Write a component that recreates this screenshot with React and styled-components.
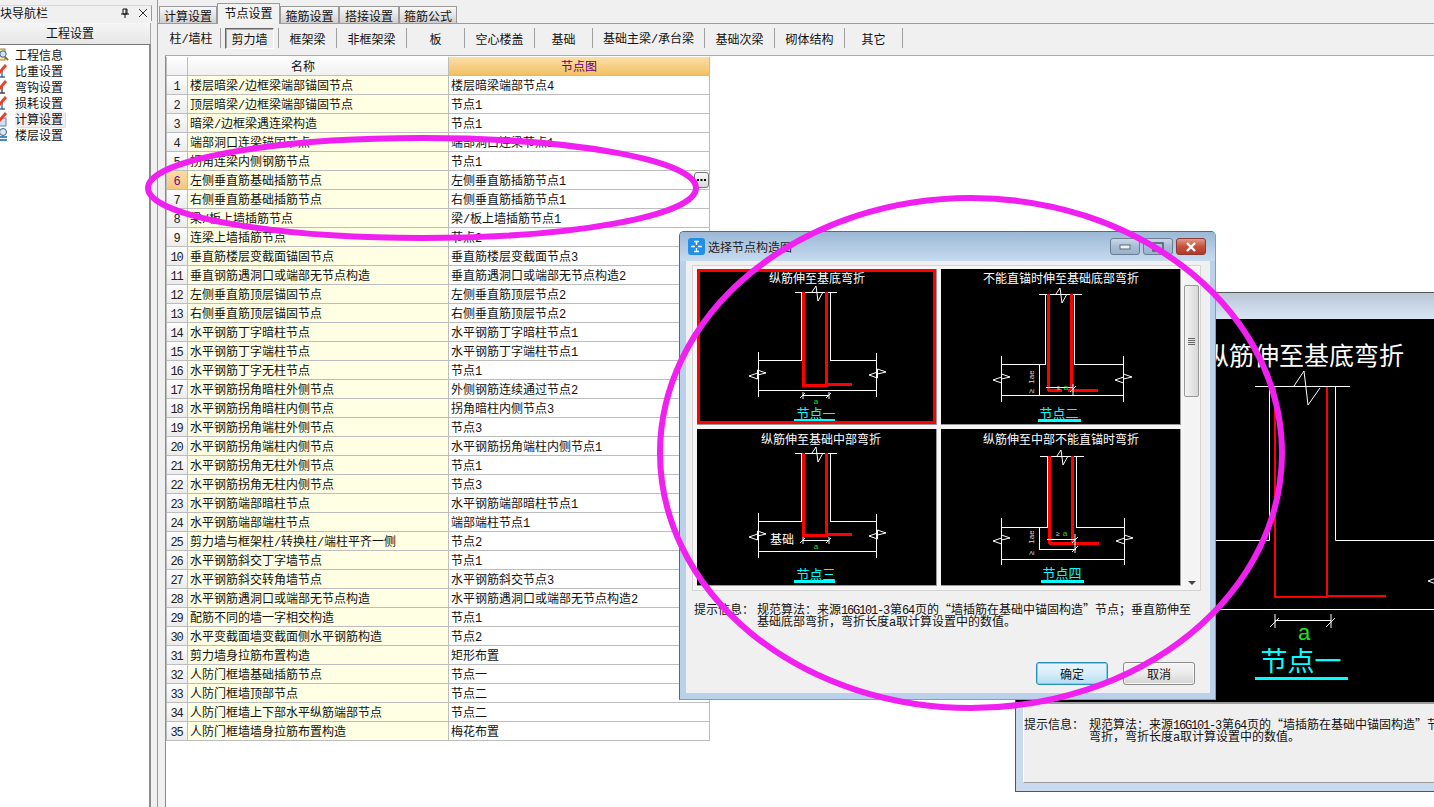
import React from "react";
import styled, { createGlobalStyle } from "styled-components";

const FONT = `"Noto Sans CJK SC", "Liberation Sans", sans-serif`;

const Global = createGlobalStyle`
  html, body { margin: 0; padding: 0; background: #fff; }
  body { font-family: ${FONT}; font-size: 12px; color: #111; }
`;

const Page = styled.div`
  position: relative;
  display: flex;
  width: 1434px;
  height: 807px;
  overflow: hidden;
  background: #f0f0f0;
`;
const Latin = styled.span`
  font-family: "Liberation Mono", monospace;
  font-size: 12px;
  line-height: 1;
  letter-spacing: -1.2px;
  margin-right: 1px;
`;

/* ---------- sidebar ---------- */
const Sidebar = styled.aside`
  width: 151px;
  flex: none;
  display: flex;
  flex-direction: column;
  padding-top: 5px;
  box-sizing: border-box;
`;
const DockHeader = styled.div`
  height: 14px;
  margin-right: -1px;
  display: flex;
  align-items: center;
  line-height: 14px;
  border-top: 1px solid #d8d8d8;
  border-right: 1px solid #9a9a9a;
  padding-bottom: 1px;
`;
const DockTitle = styled.span`flex: 1;`;
const DockIcon = styled.svg`
  width: 10px;
  height: 10px;
  margin-right: ${(p) => p.$mr}px;
  flex: none;
`;
const SectionButton = styled.div`
  height: 21px;
  margin-top: 2px;
  line-height: 20px;
  text-align: center;
  padding-right: 10px;
  background: linear-gradient(#f6f6f6, #e6e6e6);
  border-bottom: 1px solid #777;
  border-right: 1px solid #a8a8a8;
`;
const NavList = styled.ul`
  flex: 1;
  margin: 0;
  padding: 2px 0 0;
  list-style: none;
  background: #fff;
  border-right: 2px solid #8b8b8b;
`;
const NavRow = styled.li`
  height: 16px;
  display: flex;
  align-items: center;
  line-height: 16px;
`;
const NavIcon = styled.svg`
  width: 16px;
  height: 16px;
  flex: none;
  margin: 0 5px 0 -6px;
`;
const NavLabel = styled.span`
  padding: 0 2px 0 0;
  border-radius: 2px;
  background: ${(p) => (p.$active ? "#f0f0f2" : "transparent")};
  box-shadow: ${(p) => (p.$active ? "1px 1px 0 #e0e0e0" : "none")};
`;

/* ---------- main ---------- */
const Main = styled.main`
  flex: 1;
  margin-left: 6px;
  display: flex;
  flex-direction: column;
  border-left: 1px solid #9a9a9a;
  min-width: 0;
`;
const TabBar = styled.div`
  height: 24px;
  flex: none;
  display: flex;
  align-items: flex-end;
  padding-left: 2px;
  box-sizing: border-box;
  border-bottom: 1px solid #9a9a9f;
  margin-left: -1px;
`;
const Tab = styled.div`
  width: ${(p) => p.$w}px;
  height: ${(p) => (p.$active ? 21 : 17)}px;
  box-sizing: border-box;
  text-align: center;
  line-height: 17px;
  border: 1px solid #9a9a9a;
  border-bottom: none;
  margin-bottom: ${(p) => (p.$active ? -1 : 0)}px;
  background: ${(p) => (p.$active ? "#f2f2f2" : "linear-gradient(#f8f8f8, #cfcfcf)")};
  position: relative;
`;
const SubBar = styled.div`
  height: 32px;
  flex: none;
  box-sizing: border-box;
  padding: 4px 0 7px;
  margin-left: 7px;
  border-bottom: 1px solid #a9a9ae;
`;
const SubBarRow = styled.div`
  display: flex;
  height: 100%;
  margin-left: -3px;
`;
const SubItem = styled.div`
  width: ${(p) => p.$w}px;
  box-sizing: border-box;
  display: flex;
  align-items: center;
  justify-content: center;
  border-right: 1px solid #a0a0a0;
`;
const SubLabel = styled.span`
  line-height: 15px;
  padding: ${(p) => (p.$active ? "2px 5px" : "0")};
  ${(p) =>
    p.$active
      ? "border: 1px solid; border-color: #666 #fff #fff #666; background: #ededed; box-shadow: inset 1px 1px 0 #aaa;"
      : ""}
`;
const Workspace = styled.div`
  flex: 1;
  margin-left: 7px;
  background: #fff;
  border-left: 1px solid #8b8b8b;
  padding-top: 1px;
`;
const Sheet = styled.div`
  width: 542px;
  border-left: 1px solid #bdbdbd;
  border-right: 1px solid #bdbdbd;
  display: flex;
  flex-direction: column;
`;
const SheetRow = styled.div`
  display: grid;
  grid-template-columns: 21px 261px 260px;
  grid-template-rows: 18px;
  height: 19px;
  box-sizing: border-box;
  border-bottom: 1px solid #bdbdbd;
  line-height: 18px;
`;
const IndexCell = styled.div`
  text-align: center;
  border-right: 1px solid #bdbdbd;
  overflow: hidden;
  color: ${(p) => (p.$sel ? "#5a0a8a" : "#222")};
  background: ${(p) => (p.$sel ? "linear-gradient(#fbdca6, #f6c67c)" : "linear-gradient(#fdfdfd, #ececec)")};
`;
const NameCell = styled.div`
  padding-left: 2px;
  background: #ffffe3;
  border-right: 1px solid #bdbdbd;
  white-space: nowrap;
  overflow: hidden;
`;
const ValueCell = styled.div`
  position: relative;
  padding-left: 2px;
  background: #fff;
  white-space: nowrap;
`;
const HeadCell = styled.div`
  text-align: center;
  padding-right: ${(p) => p.$pr || 0}px;
  color: ${(p) => (p.$hot ? "#63007f" : "#111")};
  background: ${(p) => (p.$hot ? "linear-gradient(#fbdfa8, #f2c062)" : "linear-gradient(#fff, #f0f0f0)")};
  border-right: ${(p) => (p.$hot ? "none" : "1px solid #bdbdbd")};
`;
const MoreButton = styled.button`
  position: absolute;
  right: 0;
  top: 1px;
  width: 15px;
  height: 16px;
  padding: 0;
  display: flex;
  align-items: center;
  justify-content: center;
  border: 1px solid #777;
  border-radius: 3px;
  background: linear-gradient(#fafafa, #d8d8d8);
`;

/* ---------- windows ---------- */
const BackWindow = styled.div`
  position: absolute;
  left: 1015px;
  top: 292px;
  width: 520px;
  height: 500px;
  box-sizing: border-box;
  border: 1px solid #555;
  background: #c9daee;
  display: flex;
  flex-direction: column;
`;
const BackTitle = styled.div`
  height: 26px;
  flex: none;
  background: linear-gradient(#b8c6d6, #d8e6f4);
`;
const BackArt = styled.svg`
  display: block;
  width: 518px;
  height: 383px;
  flex: none;
  background: #000;
`;
const BackHint = styled.div`
  height: 81px;
  margin: 0 0 7px 7px;
  flex: none;
  box-sizing: border-box;
  border-top: 2px solid #9c9c9c;
  border-bottom: 1px solid #9c9c9c;
  border-left: 1px solid #fff;
  background: #efefef;
  padding: 14px 0 0 0;
  display: flex;
  line-height: 12px;
`;
const HintKey = styled.div`
  width: ${(p) => p.$w}px;
  height: 12px;
  flex: none;
`;
const HintBody = styled.div`
  flex: none;
`;
const HintLine = styled.div`
  white-space: nowrap;
  height: 12px;
`;
const Dialog = styled.div`
  position: absolute;
  left: 679px;
  top: 231px;
  width: 537px;
  height: 469px;
  box-sizing: border-box;
  border: 1px solid #5a6a7a;
  border-right-color: #29c0ee;
  border-bottom-color: #29c0ee;
  border-radius: 5px 5px 0 0;
  background: #b9d1ea;
  display: flex;
  flex-direction: column;
`;
const DialogTitle = styled.div`
  height: 29px;
  flex: none;
  display: flex;
  align-items: center;
  padding: 0 9px 0 8px;
  background: linear-gradient(#9cb8d6, #c6dbef);
  border-radius: 4px 4px 0 0;
  color: #222;
`;
const AppIcon = styled.svg`
  width: 17px;
  height: 17px;
  margin-right: 3px;
  flex: none;
`;
const TitleText = styled.span`flex: 1;`;
const WinButton = styled.div`
  width: ${(p) => p.$w}px;
  height: 17px;
  margin-left: 3px;
  box-sizing: border-box;
  border: 1px solid ${(p) => (p.$close ? "#8a3a30" : "#6a7d92")};
  border-radius: 3px;
  display: flex;
  align-items: center;
  justify-content: center;
  background: ${(p) =>
    p.$close ? "linear-gradient(#e09a88, #c8503c 50%, #b03a2a)" : "linear-gradient(#c8d8ea, #a8bcd4 50%, #9cb2cc)"};
`;
const DialogBody = styled.div`
  flex: 1;
  margin: 0 5px 6px 6px;
  background: #f0f0f0;
  display: flex;
  flex-direction: column;
  padding: 4px 9px 0 6px;
`;
const Gallery = styled.div`
  height: 326px;
  flex: none;
  display: flex;
  box-sizing: border-box;
  border: 1px solid #d4d4d4;
  background: #f6f6f6;
  padding: 3px 0 0 4px;
`;
const CellGrid = styled.div`
  display: grid;
  grid-template-columns: 240px 240px;
  grid-template-rows: 156px 157px;
  column-gap: 4px;
  row-gap: 4px;
`;
const NodeCell = styled.div`
  position: relative;
  background: #000;
  border-right: 1px solid #999;
  border-bottom: 1px solid #999;
  box-sizing: border-box;
  &::after {
    content: "";
    position: absolute;
    inset: 0;
    border: ${(p) => (p.$sel ? "3px solid #ff0000" : "0")};
  }
`;
const NodeSvg = styled.svg`
  display: block;
  width: 240px;
  height: 157px;
`;
const ScrollTrack = styled.div`
  width: 16px;
  margin-left: 3px;
  margin-right: 1px;
  display: flex;
  flex-direction: column;
  align-items: center;
  padding-top: 16px;
  background: #f4f4f4;
  position: relative;
`;
const ScrollThumb = styled.div`
  width: 15px;
  height: 112px;
  box-sizing: border-box;
  border: 1px solid #999;
  border-radius: 2px;
  background: linear-gradient(90deg, #f4f4f4, #d8d8d8);
  display: flex;
  align-items: center;
  justify-content: center;
`;
const Grip = styled.div`
  width: 7px;
  height: 7px;
  background: repeating-linear-gradient(#666 0 1px, transparent 1px 2px);
`;
const ScrollArrow = styled.div`
  position: absolute;
  bottom: 5px;
  left: 4px;
  width: 0;
  height: 0;
  border-left: 4px solid transparent;
  border-right: 4px solid transparent;
  border-top: 4px solid #444;
`;
const DialogHint = styled.div`
  display: flex;
  padding: 12px 0 0 2px;
  line-height: 12px;
  height: 47px;
  flex: none;
`;
const DialogFooter = styled.div`
  display: flex;
  justify-content: flex-end;
  gap: 15px;
  padding: 12px 6px 0 0;
`;
const PushButton = styled.button`
  width: 72px;
  height: 23px;
  padding: 0;
  font: 12px/20px ${FONT};
  color: #111;
  border-radius: 3px;
  border: 1px solid ${(p) => (p.$primary ? "#2a8ebc" : "#8a8a8a")};
  background: ${(p) =>
    p.$primary ? "linear-gradient(#eaf6fc, #d8eefa 50%, #b4dcf2)" : "linear-gradient(#f4f4f4, #ebebeb 50%, #d2d2d2)"};
  box-shadow: ${(p) => (p.$primary ? "inset 0 0 0 1px #7fd0ee" : "inset 0 0 0 1px #f8f8f8")};
`;
const Scribble = styled.svg`
  position: absolute;
  left: 0;
  top: 0;
  width: 1434px;
  height: 807px;
  pointer-events: none;
`;

/* ---------- drawing parts ---------- */
const Sketch = styled.path`
  fill: none;
  stroke: #fff;
  stroke-width: ${(p) => p.$w || 1.2}px;
  shape-rendering: crispEdges;
`;
const Thin = styled.path`
  fill: none;
  stroke: #fff;
  stroke-width: 1px;
`;
const Rebar = styled.path`
  fill: none;
  stroke: #ff0000;
  stroke-width: ${(p) => p.$w || 2.4}px;
  shape-rendering: crispEdges;
`;
const ArtTitle = styled.text`
  fill: #fff;
  font-size: ${(p) => p.$size || 12}px;
  text-anchor: middle;
  font-family: ${FONT};
`;
const ArtLabel = styled.text`
  fill: #00ffff;
  font-size: ${(p) => p.$size || 13}px;
  text-anchor: middle;
  font-family: ${FONT};
`;
const ArtGreen = styled.text`
  fill: #1fe01f;
  font-size: ${(p) => p.$size || 8}px;
  text-anchor: middle;
  font-family: "Liberation Sans", sans-serif;
`;
const ArtNote = styled.text`
  fill: #d8d8e8;
  font-size: ${(p) => p.$size || 8}px;
  text-anchor: middle;
  font-family: "Liberation Sans", sans-serif;
`;
const CyanBar = styled.rect`
  fill: #00ffff;
`;

const rows = [
  ["楼层暗梁/边框梁端部锚固节点", "楼层暗梁端部节点4"],
  ["顶层暗梁/边框梁端部锚固节点", "节点1"],
  ["暗梁/边框梁遇连梁构造", "节点1"],
  ["端部洞口连梁锚固节点", "端部洞口连梁节点1"],
  ["拐角连梁内侧钢筋节点", "节点1"],
  ["左侧垂直筋基础插筋节点", "左侧垂直筋插筋节点1"],
  ["右侧垂直筋基础插筋节点", "右侧垂直筋插筋节点1"],
  ["梁/板上墙插筋节点", "梁/板上墙插筋节点1"],
  ["连梁上墙插筋节点", "节点2"],
  ["垂直筋楼层变截面锚固节点", "垂直筋楼层变截面节点3"],
  ["垂直钢筋遇洞口或端部无节点构造", "垂直筋遇洞口或端部无节点构造2"],
  ["左侧垂直筋顶层锚固节点", "左侧垂直筋顶层节点2"],
  ["右侧垂直筋顶层锚固节点", "右侧垂直筋顶层节点2"],
  ["水平钢筋丁字暗柱节点", "水平钢筋丁字暗柱节点1"],
  ["水平钢筋丁字端柱节点", "水平钢筋丁字端柱节点1"],
  ["水平钢筋丁字无柱节点", "节点1"],
  ["水平钢筋拐角暗柱外侧节点", "外侧钢筋连续通过节点2"],
  ["水平钢筋拐角暗柱内侧节点", "拐角暗柱内侧节点3"],
  ["水平钢筋拐角端柱外侧节点", "节点3"],
  ["水平钢筋拐角端柱内侧节点", "水平钢筋拐角端柱内侧节点1"],
  ["水平钢筋拐角无柱外侧节点", "节点1"],
  ["水平钢筋拐角无柱内侧节点", "节点3"],
  ["水平钢筋端部暗柱节点", "水平钢筋端部暗柱节点1"],
  ["水平钢筋端部端柱节点", "端部端柱节点1"],
  ["剪力墙与框架柱/转换柱/端柱平齐一侧", "节点2"],
  ["水平钢筋斜交丁字墙节点", "节点1"],
  ["水平钢筋斜交转角墙节点", "水平钢筋斜交节点3"],
  ["水平钢筋遇洞口或端部无节点构造", "水平钢筋遇洞口或端部无节点构造2"],
  ["配筋不同的墙一字相交构造", "节点1"],
  ["水平变截面墙变截面侧水平钢筋构造", "节点2"],
  ["剪力墙身拉筋布置构造", "矩形布置"],
  ["人防门框墙基础插筋节点", "节点一"],
  ["人防门框墙顶部节点", "节点二"],
  ["人防门框墙上下部水平纵筋端部节点", "节点二"],
  ["人防门框墙墙身拉筋布置构造", "梅花布置"],
];

const nav = ["工程信息", "比重设置", "弯钩设置", "损耗设置", "计算设置", "楼层设置"];
const tabs = [["计算设置", 58], ["节点设置", 63], ["箍筋设置", 59], ["搭接设置", 60], ["箍筋公式", 58]];
const subs = [
  ["柱/墙柱", 59], ["剪力墙", 58], ["框架梁", 58], ["非框架梁", 70], ["板", 58], ["空心楼盖", 70],
  ["基础", 58], ["基础主梁/承台梁", 112], ["基础次梁", 70], ["砌体结构", 70], ["其它", 58],
];

function Mixed({ text }) {
  return String(text)
    .split(/([0-9A-Za-z/\-]+)/)
    .map((part, i) => (i % 2 ? <Latin key={i}>{part}</Latin> : part));
}

function NavGlyph({ kind }) {
  if (kind === 0)
    return (
      <NavIcon viewBox="0 0 16 16">
        <rect x="2" y="2" width="9" height="11" fill="#f6e7b0" stroke="#a08040" />
        <circle cx="9" cy="7" r="3.2" fill="#cfe4f6" stroke="#47617c" />
        <path d="M11 10l3 3" stroke="#a06a20" strokeWidth="2" />
      </NavIcon>
    );
  if (kind === 5)
    return (
      <NavIcon viewBox="0 0 16 16">
        <rect x="3" y="9" width="10" height="2" fill="#4a86c8" />
        <rect x="3" y="12" width="10" height="2" fill="#4a86c8" />
        <circle cx="9" cy="5" r="3.5" fill="#dfe6f0" stroke="#3a5e92" />
      </NavIcon>
    );
  return (
    <NavIcon viewBox="0 0 16 16">
      <path d="M8 6v8M4 14h7" stroke={kind === 2 ? "#444" : "#3a6ab0"} strokeWidth="1.4" fill="none" />
      {kind === 4 && <rect x="3" y="7" width="9" height="8" fill="#cfe0f4" stroke="#5a84b8" />}
      <path d="M5 10L12 2" stroke="#e8402a" strokeWidth="2.8" />
    </NavIcon>
  );
}

function BreakMarks({ top, left, right }) {
  const flag = ([x, y]) => `M${x} ${y}l8.5 -3v6zM${x + 8.5} ${y - 6}l8.5 3l-8.5 2z`;
  return (
    <>
      <Thin d={`M${top[0]} ${top[1]}l4 -6l2 15l5 -9`} />
      <Thin d={flag(left)} />
      <Thin d={flag(right)} />
    </>
  );
}

function Tick({ x, y }) {
  return <Thin d={`M${x} ${y - 3}v7M${x - 3} ${y + 3}l5 -5`} />;
}

function Node1() {
  return (
    <NodeSvg viewBox="0 0 240 157">
      <ArtTitle x="120" y="14">纵筋伸至基底弯折</ArtTitle>
      <Sketch d="M98 23.5H140M104.5 23.5V91.5H61M133.5 23.5V91.5H179.5M61.5 83V128M179.5 84V128M61 121.5H180" />
      <BreakMarks top={[115, 23]} left={[52, 107]} right={[172, 106]} />
      <Rebar d="M106.5 23V118M129.5 23V118M106 116.5H130M129 115.5H155" />
      <Thin d="M106 126.5H132" />
      <Tick x={106} y={126} />
      <Tick x={132} y={126} />
      <ArtGreen x="119" y="135">a</ArtGreen>
      <ArtLabel x="119" y="149">节点一</ArtLabel>
      <CyanBar x="97" y="150" width="41" height="3" />
    </NodeSvg>
  );
}

function Node2() {
  return (
    <NodeSvg viewBox="0 0 240 157">
      <ArtTitle x="120" y="14">不能直锚时伸至基础底部弯折</ArtTitle>
      <Sketch d="M98 25.5H141M104.5 25.5V95.5H60M133.5 25.5V95.5H182.5M60.5 87V133M182.5 87V133M60 126.5H183M98.5 95V126" />
      <BreakMarks top={[115, 25]} left={[52, 111]} right={[174, 111]} />
      <Rebar d="M107.5 25V122M130.5 25V122M107 121.5H121M127 121.5H157" />
      <Thin d="M105 118.5H132M132 115V127M129 123l6 -6" />
      <ArtNote x="118" y="121" $size={7}>≥</ArtNote>
      <ArtGreen x="125" y="121">a</ArtGreen>
      <ArtNote x="93" y="108" $size={8} transform="rotate(-90 93 108)">1ae</ArtNote>
      <ArtNote x="93" y="122" $size={8} transform="rotate(-90 93 122)">≥</ArtNote>
      <ArtLabel x="118" y="149">节点二</ArtLabel>
      <CyanBar x="97" y="150" width="43" height="3" />
    </NodeSvg>
  );
}

function Node3() {
  return (
    <NodeSvg viewBox="0 0 240 157">
      <ArtTitle x="124" y="15">纵筋伸至基础中部弯折</ArtTitle>
      <Sketch d="M98 24.5H140M104.5 24.5V92.5H61M133.5 24.5V92.5H179.5M61.5 84V129M179.5 85V129M61 122.5H180" />
      <BreakMarks top={[115, 24]} left={[52, 108]} right={[172, 107]} />
      <Rebar d="M106.5 24V108M129.5 24V108M106 106.5H130M129 105.5H155" />
      <Thin d="M106 111.5H132" />
      <Tick x={106} y={111} />
      <Tick x={132} y={111} />
      <ArtGreen x="119" y="120">a</ArtGreen>
      <ArtTitle x="85" y="115">基础</ArtTitle>
      <ArtLabel x="119" y="150">节点三</ArtLabel>
      <CyanBar x="97" y="151" width="41" height="3" />
    </NodeSvg>
  );
}

function Node4() {
  return (
    <NodeSvg viewBox="0 0 240 157">
      <ArtTitle x="120" y="15">纵筋伸至中部不能直锚时弯折</ArtTitle>
      <Sketch d="M99 27.5H143M106.5 27.5V98.5H60M135.5 27.5V98.5H183.5M60.5 89V136M183.5 89V136M60 130.5H184M98.5 98V120.5H135" />
      <BreakMarks top={[116, 27]} left={[52, 112]} right={[175, 112]} />
      <Rebar d="M108.5 27V115M131.5 27V115M108 114.5H158" />
      <Thin d="M106 110.5H135M134 105V116M131 114l6 -6M134 115v9M131 123l6 -6" />
      <ArtNote x="117" y="107" $size={7}>≥</ArtNote>
      <ArtGreen x="124" y="107">a</ArtGreen>
      <ArtNote x="93" y="108" $size={8} transform="rotate(-90 93 108)">1ae</ArtNote>
      <ArtNote x="93" y="124" $size={8} transform="rotate(-90 93 124)">≥</ArtNote>
      <ArtLabel x="121" y="149">节点四</ArtLabel>
      <CyanBar x="100" y="151" width="43" height="3" />
    </NodeSvg>
  );
}

export default function App() {
  return (
    <>
      <Global />
      <Page>
        <Sidebar>
          <DockHeader>
            <DockTitle>块导航栏</DockTitle>
            <DockIcon $mr={8} viewBox="0 0 10 10">
              <path d="M3 1h4v5H3zM1 6h8M5 6v4M6 1v5" stroke="#111" fill="none" />
            </DockIcon>
            <DockIcon $mr={3} viewBox="0 0 10 10">
              <path d="M1 1l8 8M9 1l-8 8" stroke="#333" fill="none" />
            </DockIcon>
          </DockHeader>
          <SectionButton>工程设置</SectionButton>
          <NavList>
            {nav.map((t, i) => (
              <NavRow key={t}>
                <NavGlyph kind={i} />
                <NavLabel $active={i === 4}>{t}</NavLabel>
              </NavRow>
            ))}
          </NavList>
        </Sidebar>
        <Main>
          <TabBar>
            {tabs.map(([t, w], i) => (
              <Tab key={t} $w={w} $active={i === 1}>{t}</Tab>
            ))}
          </TabBar>
          <SubBar>
            <SubBarRow>
              {subs.map(([t, w], i) => (
                <SubItem key={t} $w={w}>
                  <SubLabel $active={i === 1}><Mixed text={t} /></SubLabel>
                </SubItem>
              ))}
            </SubBarRow>
          </SubBar>
          <Workspace>
            <Sheet>
              <SheetRow>
                <HeadCell />
                <HeadCell $pr={30}>名称</HeadCell>
                <HeadCell $hot>节点图</HeadCell>
              </SheetRow>
              {rows.map(([a, b], i) => (
                <SheetRow key={i}>
                  <IndexCell $sel={i === 5}><Latin>{i + 1}</Latin></IndexCell>
                  <NameCell><Mixed text={a} /></NameCell>
                  <ValueCell>
                    <Mixed text={b} />
                    {i === 5 && (
                      <MoreButton aria-label="更多">
                        <svg width="9" height="3" viewBox="0 0 9 3">
                          <path d="M0 0h2v2H0zM3.5 0h2v2h-2zM7 0h2v2H7z" fill="#000" />
                        </svg>
                      </MoreButton>
                    )}
                  </ValueCell>
                </SheetRow>
              ))}
            </Sheet>
          </Workspace>
        </Main>

        <BackWindow>
          <BackTitle />
          <BackArt viewBox="0 0 518 383">
            <ArtTitle x="288" y="46" $size={25}>纵筋伸至基底弯折</ArtTitle>
            <Thin d="M239 67.5H334M253.5 67.5V221.5H200M319.5 67.5V221.5H420M200 290.5H420" />
            <Thin d="M278 67l10 -15l4 34l12 -17" />
            <Thin d="M412 262l8 -3v6zM420 256l7 3l-7 2z" />
            <Rebar $w={2} d="M259 68V279M311 68V279M258 278H312M311 277H370" />
            <Thin d="M259 301.5H315M259 295v14M315 295v14M254 308l9 -9M310 308l9 -9" />
            <ArtGreen x="288" y="321" $size={22}>a</ArtGreen>
            <ArtLabel x="285" y="352" $size={27}>节点一</ArtLabel>
            <CyanBar x="239" y="358" width="93" height="3" />
          </BackArt>
          <BackHint>
            <HintKey $w={65}>提示信息：</HintKey>
            <HintBody>
              <HintLine><Mixed text="规范算法：来源16G101-3第64页的“墙插筋在基础中锚固构造”节点；垂直筋伸至基础底部" /></HintLine>
              <HintLine><Mixed text="弯折，弯折长度a取计算设置中的数值。" /></HintLine>
            </HintBody>
          </BackHint>
        </BackWindow>

        <Dialog>
          <DialogTitle>
            <AppIcon viewBox="0 0 17 17">
              <rect width="17" height="17" rx="3" fill="#1f8fe8" />
              <path d="M8.5 3v4M8.5 10v4M3 8.5h4M10 8.5h4M6 3.5h5M6 13.5h5" stroke="#fff" strokeWidth="1.4" fill="none" />
            </AppIcon>
            <TitleText>选择节点构造图</TitleText>
            <WinButton $w={30}>
              <svg width="12" height="6"><rect x="1" y="1" width="10" height="4" fill="#eef3f8" stroke="#5a6a7a" /></svg>
            </WinButton>
            <WinButton $w={30}>
              <svg width="12" height="10"><rect x="1" y="1" width="10" height="8" fill="none" stroke="#4a5a6a" strokeWidth="1.5" /></svg>
            </WinButton>
            <WinButton $w={30} $close>
              <svg width="12" height="10"><path d="M2 1l8 8M10 1l-8 8" stroke="#fff" strokeWidth="2.4" /></svg>
            </WinButton>
          </DialogTitle>
          <DialogBody>
            <Gallery>
              <CellGrid>
                <NodeCell $sel><Node1 /></NodeCell>
                <NodeCell><Node2 /></NodeCell>
                <NodeCell><Node3 /></NodeCell>
                <NodeCell><Node4 /></NodeCell>
              </CellGrid>
              <ScrollTrack>
                <ScrollThumb><Grip /></ScrollThumb>
                <ScrollArrow />
              </ScrollTrack>
            </Gallery>
            <DialogHint>
              <HintKey $w={63}>提示信息：</HintKey>
              <HintBody>
                <HintLine><Mixed text="规范算法：来源16G101-3第64页的“墙插筋在基础中锚固构造”节点；垂直筋伸至" /></HintLine>
                <HintLine><Mixed text="基础底部弯折，弯折长度a取计算设置中的数值。" /></HintLine>
              </HintBody>
            </DialogHint>
            <DialogFooter>
              <PushButton $primary>确定</PushButton>
              <PushButton>取消</PushButton>
            </DialogFooter>
          </DialogBody>
        </Dialog>

        <Scribble viewBox="0 0 1434 807">
          <ellipse cx="422" cy="188" rx="274" ry="50" fill="none" stroke="#f020f0" strokeWidth="6" />
          <ellipse cx="971" cy="453" rx="311" ry="255" fill="none" stroke="#f020f0" strokeWidth="6" />
        </Scribble>
      </Page>
    </>
  );
}
